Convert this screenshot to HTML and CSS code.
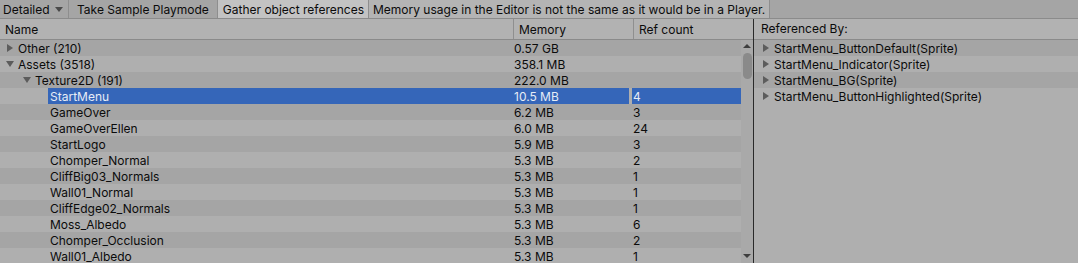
FILE: index.html
```html
<!DOCTYPE html>
<html lang="en">
<head>
    <meta charset="UTF-8">
    <title>Memory Profiler</title>
    <link rel="stylesheet" href="styles.css">
</head>
<body>
    <div class="toolbar">
        <div class="tb-item tb-dropdown">Detailed <span class="caret"></span></div>
        <div class="tb-item tb-first">Take Sample Playmode</div>
        <div class="tb-item tb-active">Gather object references</div>
        <div class="tb-item tb-label">Memory usage in the Editor is not the same as it would be in a Player.</div>
    </div>

    <div class="main">
        <div class="tree-pane">
            <div class="header">
                <div class="col col-name">Name</div>
                <div class="col col-mem">Memory</div>
                <div class="col col-ref">Ref count</div>
            </div>
            <div class="tree-body">
                <ul class="rows">
                    <li class="row"><span class="cell name lvl0"><i class="tri"></i>Other (210)</span><span class="cell mem">0.57 GB</span><span class="cell ref"></span></li>
                    <li class="row"><span class="cell name lvl0"><i class="tri open"></i>Assets (3518)</span><span class="cell mem">358.1 MB</span><span class="cell ref"></span></li>
                    <li class="row"><span class="cell name lvl1"><i class="tri open"></i>Texture2D (191)</span><span class="cell mem">222.0 MB</span><span class="cell ref"></span></li>
                    <li class="row selected"><span class="cell name lvl2">StartMenu</span><span class="cell mem">10.5 MB</span><span class="cell ref">4</span></li>
                    <li class="row"><span class="cell name lvl2">GameOver</span><span class="cell mem">6.2 MB</span><span class="cell ref">3</span></li>
                    <li class="row"><span class="cell name lvl2">GameOverEllen</span><span class="cell mem">6.0 MB</span><span class="cell ref">24</span></li>
                    <li class="row"><span class="cell name lvl2">StartLogo</span><span class="cell mem">5.9 MB</span><span class="cell ref">3</span></li>
                    <li class="row"><span class="cell name lvl2">Chomper_Normal</span><span class="cell mem">5.3 MB</span><span class="cell ref">2</span></li>
                    <li class="row"><span class="cell name lvl2">CliffBig03_Normals</span><span class="cell mem">5.3 MB</span><span class="cell ref">1</span></li>
                    <li class="row"><span class="cell name lvl2">Wall01_Normal</span><span class="cell mem">5.3 MB</span><span class="cell ref">1</span></li>
                    <li class="row"><span class="cell name lvl2">CliffEdge02_Normals</span><span class="cell mem">5.3 MB</span><span class="cell ref">1</span></li>
                    <li class="row"><span class="cell name lvl2">Moss_Albedo</span><span class="cell mem">5.3 MB</span><span class="cell ref">6</span></li>
                    <li class="row"><span class="cell name lvl2">Chomper_Occlusion</span><span class="cell mem">5.3 MB</span><span class="cell ref">2</span></li>
                    <li class="row"><span class="cell name lvl2">Wall01_Albedo</span><span class="cell mem">5.3 MB</span><span class="cell ref">1</span></li>
                </ul>
                <div class="scrollbar">
                    <span class="arrow up"></span>
                    <span class="thumb"></span>
                    <span class="arrow down"></span>
                </div>
            </div>
        </div>

        <div class="ref-pane">
            <div class="ref-header">Referenced By:</div>
            <ul class="rows">
                <li class="row"><span class="cell ref-name"><i class="tri"></i>StartMenu_ButtonDefault(Sprite)</span></li>
                <li class="row"><span class="cell ref-name"><i class="tri"></i>StartMenu_Indicator(Sprite)</span></li>
                <li class="row"><span class="cell ref-name"><i class="tri"></i>StartMenu_BG(Sprite)</span></li>
                <li class="row"><span class="cell ref-name"><i class="tri"></i>StartMenu_ButtonHighlighted(Sprite)</span></li>
            </ul>
        </div>
    </div>
</body>
</html>
```

FILE: styles.css
```css
body {
    margin: 0;
    font-family: Inter, "Noto Sans", sans-serif;
    font-size: 12px;
    color: #0b0b0b;
    background-color: #adadad;
    overflow: hidden;
    height: 263px;
}

ul {
    list-style: none;
    margin: 0;
    padding: 0;
}

/* toolbar */
.toolbar {
    display: flex;
    height: 18px;
    background-color: #a5a5a5;
    border-bottom: 1px solid #8b8b8b;
}

.tb-item {
    display: flex;
    align-items: center;
    padding: 0 4px 0 5px;
    border-right: 1px solid #8e8e8e;
    white-space: nowrap;
}

.tb-dropdown {
    width: 60px;
    padding: 0 5px 0 3px;
    justify-content: space-between;
}

.tb-first {
    padding: 0 8px;
}

.caret {
    width: 0;
    height: 0;
    border-left: 4px solid transparent;
    border-right: 4px solid transparent;
    border-top: 5px solid #4a4a4a;
}

.tb-active {
    background-color: #c3c3c3;
}

.tb-label {
    background-color: #b4b4b4;
    padding: 0 4px;
}

.main {
    display: flex;
}

/* tree */
.tree-pane {
    width: 753px;
    border-right: 1px solid #2a2a2a;
}

.header {
    display: flex;
    height: 20px;
    background-color: #b2b2b2;
    border-bottom: 1px solid #8a8a8a;
}

.col {
    display: flex;
    align-items: center;
    box-sizing: border-box;
}

.col-name {
    width: 513px;
    padding-left: 5px;
}

.col-mem {
    width: 120px;
    padding-left: 5px;
    border-left: 1px solid #8f8f8f;
}

.col-ref {
    flex: 1;
    padding-left: 5px;
    border-left: 1px solid #8f8f8f;
}

.tree-body {
    display: flex;
}

.tree-body .rows {
    width: 741px;
}

.row {
    display: flex;
    height: 16px;
    background-color: #afafaf;
    white-space: nowrap;
}

.row:nth-child(odd) {
    background-color: #a5a5a5;
}

.cell {
    display: flex;
    align-items: center;
    box-sizing: border-box;
    padding-top: 2px;
    line-height: 14px;
}

.name {
    width: 513px;
}

.lvl0 { padding-left: 6px; }
.lvl1 { padding-left: 23px; }
.lvl2 { margin-left: 48px; width: 465px; padding-left: 2px; }

.mem {
    width: 116px;
    padding-left: 1px;
    margin-right: 3px;
}

.ref {
    flex: 1;
    padding-left: 1px;
}

.selected .cell {
    background-color: #3566b9;
    color: #e6ecf6;
}

.tri {
    display: inline-block;
    width: 0;
    height: 0;
    border-top: 4px solid transparent;
    border-bottom: 4px solid transparent;
    border-left: 6px solid #5c5c5c;
    margin: -2px 5px 0 1px;
}

.tri.open {
    border-left: 4px solid transparent;
    border-right: 4px solid transparent;
    border-top: 6px solid #5c5c5c;
    border-bottom: none;
    margin: -2px 4px 0 0;
}

/* scrollbar */
.scrollbar {
    width: 12px;
    height: 223px;
    background-color: #a9a9a9;
    display: flex;
    flex-direction: column;
    align-items: center;
    padding-top: 4px;
    box-sizing: border-box;
}

.arrow {
    width: 0;
    height: 0;
    border-left: 4px solid transparent;
    border-right: 4px solid transparent;
}

.arrow.up {
    border-bottom: 4px solid #3e3e3e;
}

.arrow.down {
    border-top: 4px solid #3e3e3e;
    margin-top: auto;
    margin-bottom: 5px;
}

.thumb {
    width: 9px;
    height: 26px;
    margin-top: 5px;
    border-radius: 5px;
    background-color: #8a8a8a;
}

/* referenced by */
.ref-pane {
    flex: 1;
    background-color: #afafaf;
}

.ref-header {
    height: 20px;
    line-height: 20px;
    padding-left: 7px;
    background-color: #b2b2b2;
    border-bottom: 1px solid #8a8a8a;
}

.ref-name {
    padding-left: 9px;
}

.ref-name .tri {
    margin-left: 0;
}
```
